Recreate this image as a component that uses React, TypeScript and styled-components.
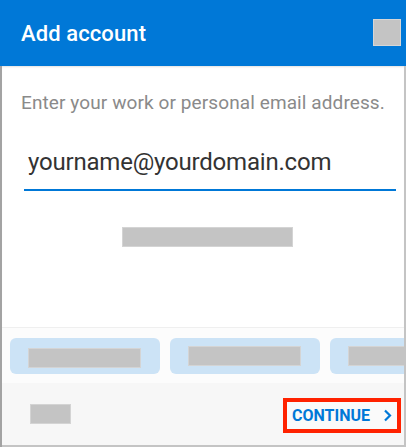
import styled, { createGlobalStyle } from "styled-components";

const BLUE = "#0078d7";
const PLACEHOLDER = "#c4c4c4";

const GlobalStyle = createGlobalStyle`
  body {
    margin: 0;
    background: #ffffff;
    font-family: Roboto, "Liberation Sans", Arial, sans-serif;
  }
`;

const Screen = styled.div`
  width: 406px;
  height: 447px;
  display: flex;
  flex-direction: column;
  overflow: hidden;
`;

const Header = styled.header`
  height: 66px;
  flex-shrink: 0;
  background: ${BLUE};
  display: flex;
  align-items: center;
  justify-content: space-between;
  padding: 0 5px 0 21px;
  box-sizing: border-box;
`;

const Title = styled.h1`
  margin: 0;
  color: #ffffff;
  font-size: 22px;
  font-weight: 500;
  letter-spacing: 0.1px;
`;

const HeaderAction = styled.div`
  width: 28px;
  height: 27px;
  margin-top: -1px;
  background: ${PLACEHOLDER};
  box-shadow: inset 0 0 0 1px #d6d6d6;
`;

const Body = styled.main`
  flex: 1;
  display: flex;
  flex-direction: column;
  border-left: 2px solid #a3a3a3;
  border-right: 2px solid #c4c4c4;
  box-shadow: inset 0 2px 2px -1px rgba(0, 0, 0, 0.12);
`;

const Content = styled.section`
  flex: 1;
  display: flex;
  flex-direction: column;
  padding: 26px 8px 0 19px;
`;

const Prompt = styled.p`
  margin: 0;
  font-size: 19px;
  line-height: 22px;
  letter-spacing: 0.1px;
  color: #8a8a8a;
`;

const EmailField = styled.div`
  margin: 34px 0 0 3px;
  padding: 0 0 12px 4px;
  border-bottom: 2px solid ${BLUE};
  font-size: 24px;
  line-height: 29px;
  letter-spacing: -0.2px;
  color: #333333;
`;

const Placeholder = styled.div<{ $w: number; $h?: number }>`
  width: ${(p) => p.$w}px;
  height: ${(p) => p.$h ?? 20}px;
  background: ${PLACEHOLDER};
  box-shadow: inset 0 0 0 1px #d4d4d4;
  flex-shrink: 0;
`;

const SignInLink = styled.div`
  margin: 36px 0 0 101px;
`;

const Suggestions = styled.div`
  display: flex;
  gap: 10px;
  padding: 10px 0 9px 8px;
  border-top: 1px solid #efefef;
  background: #fcfcfc;
  overflow: hidden;
`;

const Chip = styled.div<{ $top: number }>`
  width: 150px;
  height: 36px;
  flex-shrink: 0;
  border-radius: 6px;
  background: #cce3f6;
  padding: ${(p) => p.$top}px 0 0 18px;
  box-sizing: border-box;
`;

const Footer = styled.footer`
  height: 62px;
  display: flex;
  align-items: center;
  justify-content: space-between;
  padding: 0 3px 0 28px;
  background: #f7f7f7;
  border-bottom: 2px solid #c4c4c4;
`;

const ContinueButton = styled.button`
  display: flex;
  align-items: center;
  gap: 13px;
  height: 35px;
  padding: 0 5px 0 5px;
  margin-top: 2px;
  border: 4px solid #ff2200;
  background: #fafafa;
  color: ${BLUE};
  font-family: Roboto, "Liberation Sans", Arial, sans-serif;
  font-size: 16px;
  font-weight: 700;
  cursor: pointer;
`;

const Chevron = () => (
  <svg width="9" height="13" viewBox="0 0 9 13" fill="none">
    <polyline points="2,1.5 7,6.5 2,11.5" stroke={BLUE} strokeWidth="2.2" />
  </svg>
);

const chips = [10, 8, 8];

export default function App() {
  return (
    <>
      <GlobalStyle />
      <Screen>
        <Header>
          <Title>Add account</Title>
          <HeaderAction />
        </Header>
        <Body>
          <Content>
            <Prompt>Enter your work or personal email address.</Prompt>
            <EmailField>yourname@yourdomain.com</EmailField>
            <SignInLink>
              <Placeholder $w={171} />
            </SignInLink>
          </Content>
          <Suggestions>
            {chips.map((top, i) => (
              <Chip key={i} $top={top}>
                <Placeholder $w={113} />
              </Chip>
            ))}
          </Suggestions>
          <Footer>
            <Placeholder $w={41} />
            <ContinueButton>
              CONTINUE
              <Chevron />
            </ContinueButton>
          </Footer>
        </Body>
      </Screen>
    </>
  );
}
